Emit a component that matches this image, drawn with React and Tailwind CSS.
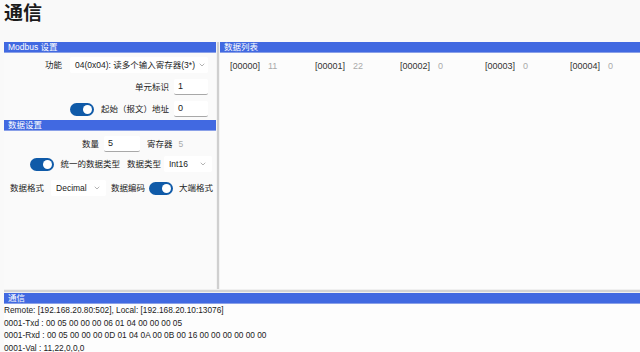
import { ChevronDown } from 'lucide-react';

const font = { fontFamily: '"Liberation Sans", "Noto Sans CJK SC", sans-serif' };

function Header({ title }) {
  return (
    <div className="h-[11px] bg-[#4169e1] text-white text-[8.5px] leading-[11px] px-1 border-b border-[#8aa0e8] whitespace-nowrap">
      {title}
    </div>
  );
}

function Toggle() {
  return (
    <div className="shrink-0 w-[24px] h-[13px] rounded-full bg-[#0f5aa8] flex items-center justify-end pr-[2px]">
      <div className="w-[9px] h-[9px] rounded-full bg-white" />
    </div>
  );
}

function Input({ value, w = 'w-[34px]' }) {
  return (
    <div className={`${w} shrink-0 h-[16px] bg-white border-b border-[#a8a8a8] rounded-[2px] text-[9px] leading-[15px] pl-1 text-[#222]`}>
      {value}
    </div>
  );
}

function Select({ value, w }) {
  return (
    <div className={`${w} shrink-0 h-[16px] bg-white rounded-[2px] text-[8.5px] leading-[16px] pl-[5px] pr-[5px] flex items-center justify-between gap-[3px] text-[#222]`}>
      <span>{value}</span>
      <ChevronDown size={8} strokeWidth={1.5} className="text-[#666] shrink-0" />
    </div>
  );
}

const items = [
  ['[00000]', '11'],
  ['[00001]', '22'],
  ['[00002]', '0'],
  ['[00003]', '0'],
  ['[00004]', '0'],
];

const logs = [
  'Remote: [192.168.20.80:502], Local: [192.168.20.10:13076]',
  '0001-Txd : 00 05 00 00 00 06 01 04 00 00 00 05',
  '0001-Rxd : 00 05 00 00 00 0D 01 04 0A 00 0B 00 16 00 00 00 00 00 00',
  '0001-Val : 11,22,0,0,0',
];

export default function App() {
  return (
    <div className="w-[640px] h-[352px] bg-[#f9f9f9] text-[#222] flex flex-col overflow-hidden whitespace-nowrap" style={font}>
      {/* Title */}
      <div className="h-[42px] shrink-0 pl-[4px] pt-[1px] text-[19px] font-bold leading-[26px] text-[#1a1a1a]">通信</div>

      {/* Main */}
      <div className="flex flex-1 min-h-0 pl-[4px]">
        {/* Left */}
        <div className="w-[212px] shrink-0 flex flex-col bg-[#fafafa]">
          <Header title="Modbus 设置" />
          <div className="flex flex-col text-[8.5px]">
            <div className="flex items-center justify-end gap-[8px] pr-[8px] mt-[4px] h-[16px]">
              <span>功能</span>
              <Select value="04(0x04): 读多个输入寄存器(3*)" w="w-[138px]" />
            </div>
            <div className="flex items-center justify-end gap-[5px] pr-[8px] mt-[6px] h-[16px]">
              <span>单元标识</span>
              <Input value="1" />
            </div>
            <div className="flex items-center justify-end gap-[5px] pr-[8px] mt-[6px] h-[16px]">
              <Toggle />
              <span className="ml-[2px]">起始（报文）地址</span>
              <Input value="0" />
            </div>
          </div>
          <div className="mt-[3px]">
            <Header title="数据设置" />
          </div>
          <div className="flex flex-col text-[8.5px]">
            <div className="flex items-center gap-[5px] pl-[78px] mt-[5px] h-[16px]">
              <span>数量</span>
              <Input value="5" w="w-[36px]" />
              <span className="ml-[2px]">寄存器</span>
              <span className="ml-[1px] text-[#aaa]">5</span>
            </div>
            <div className="flex items-center justify-end pr-[4px] mt-[4px] h-[16px]">
              <Toggle />
              <span className="ml-[6px]">统一的数据类型</span>
              <span className="ml-[7px]">数据类型</span>
              <span className="ml-[3px]"><Select value="Int16" w="w-[48px]" /></span>
            </div>
            <div className="flex items-center pl-[6px] mt-[8px] h-[16px]">
              <span>数据格式</span>
              <span className="ml-[7px]"><Select value="Decimal" w="w-[55px]" /></span>
              <span className="ml-[5px]">数据编码</span>
              <span className="ml-[4px]"><Toggle /></span>
              <span className="ml-[6px]">大端格式</span>
            </div>
          </div>
        </div>

        {/* Divider */}
        <div className="w-[4px] shrink-0 bg-[#f3f3f3] flex justify-center">
          <div className="w-[2px] bg-[#cfcfcf]" />
        </div>

        {/* Right */}
        <div className="flex-1 min-w-0 flex flex-col bg-[#fcfcfc]">
          <Header title="数据列表" />
          <div className="flex pl-[10px] pt-[6px] text-[9px]">
            {items.map(([k, v]) => (
              <div key={k} className="w-[85px] shrink-0 flex gap-[8px] h-[16px] items-center">
                <span className="text-[#333]">{k}</span>
                <span className="text-[#aaa]">{v}</span>
              </div>
            ))}
          </div>
        </div>
      </div>

      {/* Horizontal divider */}
      <div className="h-[4px] shrink-0 bg-[#f0f0f0] flex flex-col justify-center ml-[4px]">
        <div className="h-[2px] bg-[#d4d4d4]" />
      </div>

      {/* Bottom */}
      <div className="h-[59px] shrink-0 ml-[4px] bg-[#fdfdfd] flex flex-col">
        <Header title="通信" />
        <div className="text-[8.3px] leading-[12.5px] text-[#222]">
          {logs.map((l) => (
            <div key={l}>{l}</div>
          ))}
        </div>
      </div>
    </div>
  );
}
